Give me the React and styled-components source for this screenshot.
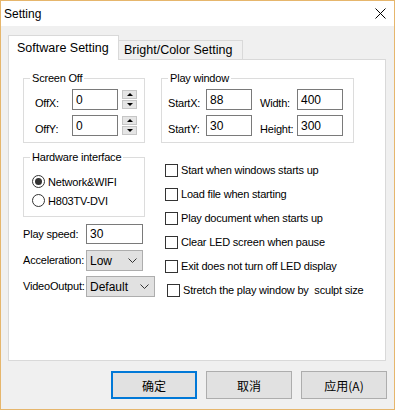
import React from 'react';
import styled, { createGlobalStyle } from 'styled-components';

const GlobalStyle = createGlobalStyle`
  body {
    margin: 0;
    background: #ffffff;
    font-family: "Liberation Sans", Arial, sans-serif;
  }
  * {
    box-sizing: border-box;
  }
`;

const Window = styled.div`
  width: 395px;
  height: 410px;
  border: 1px solid #e6b66c;
  background: #f0f0f0;
  display: flex;
  flex-direction: column;
`;

const TitleBar = styled.div`
  height: 25px;
  background: #ffffff;
  display: flex;
  align-items: center;
  justify-content: space-between;
  padding: 0 8px 0 3px;
  font-size: 12px;
  color: #000;
`;

const Body = styled.div`
  padding: 9px 8px 0 7px;
  display: flex;
  flex-direction: column;
`;

const TabStrip = styled.div`
  display: flex;
  align-items: flex-end;
  height: 24px;
  position: relative;
  z-index: 1;
`;

const Tab = styled.div`
  width: ${(p) => (p.active ? '111px' : '125px')};
  height: ${(p) => (p.active ? '25px' : '19px')};
  margin-left: ${(p) => (p.active ? '0' : '-1px')};
  margin-bottom: ${(p) => (p.active ? '-1px' : '0')};
  padding-left: ${(p) => (p.active ? '8px' : '5px')};
  background: ${(p) => (p.active ? '#ffffff' : '#f0f0f0')};
  border: 1px solid #d9d9d9;
  border-bottom: none;
  display: flex;
  align-items: center;
  font-size: 12.5px;
  color: #000;
  white-space: nowrap;
`;

const Panel = styled.div`
  height: 302px;
  background: #ffffff;
  border: 1px solid #d9d9d9;
  padding: 11px 0 0 14px;
  display: grid;
  grid-template-columns: 131px 1fr;
  grid-auto-rows: min-content;
  column-gap: 7px;
  row-gap: 7px;
  font-size: 11px;
  letter-spacing: -0.2px;
  color: #000;
`;

const Group = styled.fieldset`
  margin: 0;
  padding: 0;
  min-width: 0;
  width: ${(p) => p.width}px;
  border: 1px solid #dcdcdc;
`;

const Legend = styled.legend`
  margin-left: 6px;
  padding: 0 2px;
  font-size: 11px;
  line-height: 14px;
`;

const GroupBody = styled.div`
  padding: ${(p) => p.pad};
  display: flex;
  flex-direction: column;
  gap: ${(p) => p.gap}px;
`;

const FieldRow = styled.div`
  display: flex;
  align-items: ${(p) => (p.center ? 'center' : 'flex-start')};
  height: ${(p) => p.h || 21}px;
`;

const Label = styled.span`
  width: ${(p) => p.width}px;
  flex: none;
  padding-top: ${(p) => (p.low ? 8 : 0)}px;
  line-height: 13px;
  white-space: nowrap;
`;

const TextBox = styled.div`
  width: ${(p) => p.width}px;
  height: ${(p) => p.h || 21}px;
  flex: none;
  border: 1px solid #7a7a7a;
  background: #fff;
  padding: 0 3px;
  display: flex;
  align-items: center;
  font-size: 12px;
  letter-spacing: 0;
`;

const Spin = styled.div`
  display: flex;
  flex-direction: column;
  gap: 1px;
  margin: 1px 0 0 4px;
  width: 15px;
  height: 19px;
`;

const SpinButton = styled.div`
  flex: 1;
  background: #e5e5e5;
  border: 1px solid #c6c6c6;
  display: flex;
  align-items: center;
  justify-content: center;
`;

const Arrow = styled.span`
  width: 0;
  height: 0;
  border-left: 3px solid transparent;
  border-right: 3px solid transparent;
  ${(p) => (p.up ? 'border-bottom: 3px solid #000;' : 'border-top: 3px solid #000;')}
`;

const Gap = styled.span`
  width: ${(p) => p.w}px;
  flex: none;
`;

const Stack = styled.div`
  display: flex;
  flex-direction: column;
`;

const Radio = styled.div`
  height: 19px;
  display: flex;
  align-items: center;
  gap: 3px;
`;

const RadioDot = styled.span`
  width: 13px;
  height: 13px;
  border-radius: 50%;
  border: 1px solid #333;
  display: flex;
  align-items: center;
  justify-content: center;
  &::after {
    content: '';
    width: 7px;
    height: 7px;
    border-radius: 50%;
    background: ${(p) => (p.checked ? '#333' : 'transparent')};
  }
`;

const Select = styled.div`
  width: ${(p) => p.width}px;
  height: 21px;
  flex: none;
  background: #e1e1e1;
  border: 1px solid #adadad;
  display: flex;
  align-items: center;
  justify-content: space-between;
  padding: 0 5px 0 3px;
  font-size: 12px;
  letter-spacing: 0;
`;

const CheckList = styled.div`
  margin-top: 8px;
  display: flex;
  flex-direction: column;
`;

const CheckRow = styled.div`
  height: 24px;
  display: flex;
  align-items: center;
  gap: 3px;
  padding-left: ${(p) => 4 + (p.indent || 0)}px;
  white-space: pre;
`;

const CheckBox = styled.span`
  width: 13px;
  height: 13px;
  flex: none;
  border: 1px solid #333;
  background: #fff;
`;

const ButtonRow = styled.div`
  display: flex;
  justify-content: flex-end;
  gap: 9px;
  margin: 10px -1px 0 0;
`;

const Button = styled.div`
  width: 86px;
  height: 28px;
  background: #e1e1e1;
  border: ${(p) => (p.primary ? '2px solid #0078d7' : '1px solid #adadad')};
  display: flex;
  align-items: center;
  justify-content: center;
  font-family: "Noto Sans CJK SC", "Liberation Sans", sans-serif;
  font-size: 12px;
  color: #000;
`;

function SpinBox() {
  return (
    <Spin>
      <SpinButton>
        <Arrow up />
      </SpinButton>
      <SpinButton>
        <Arrow />
      </SpinButton>
    </Spin>
  );
}

function Chevron() {
  return (
    <svg width="9" height="5" viewBox="0 0 9 5">
      <path d="M0.5 0.5 L4.5 4.5 L8.5 0.5" fill="none" stroke="#333" strokeWidth="1" />
    </svg>
  );
}

const checks = [
  'Start when windows starts up',
  'Load file when starting',
  'Play document when starts up',
  'Clear LED screen when pause',
  'Exit does not turn off LED display',
];

export default function App() {
  return (
    <>
      <GlobalStyle />
      <Window>
        <TitleBar>
          <span>Setting</span>
          <svg width="11" height="11" viewBox="0 0 11 11">
            <path d="M0.5 0.5 L10.5 10.5 M10.5 0.5 L0.5 10.5" stroke="#000" strokeWidth="1" />
          </svg>
        </TitleBar>
        <Body>
          <TabStrip>
            <Tab active>Software Setting</Tab>
            <Tab>Bright/Color Setting</Tab>
          </TabStrip>
          <Panel>
            <Group width={122}>
              <Legend>Screen Off</Legend>
              <GroupBody pad="4px 0 6px 11px" gap={5}>
                <FieldRow>
                  <Label width={37} low>OffX:</Label>
                  <TextBox width={46}>0</TextBox>
                  <SpinBox />
                </FieldRow>
                <FieldRow>
                  <Label width={37} low>OffY:</Label>
                  <TextBox width={46}>0</TextBox>
                  <SpinBox />
                </FieldRow>
              </GroupBody>
            </Group>
            <Group width={193}>
              <Legend>Play window</Legend>
              <GroupBody pad="4px 0 6px 6px" gap={5}>
                <FieldRow>
                  <Label width={38} low>StartX:</Label>
                  <TextBox width={46}>88</TextBox>
                  <Gap w={8} />
                  <Label width={37} low>Width:</Label>
                  <TextBox width={46}>400</TextBox>
                </FieldRow>
                <FieldRow>
                  <Label width={38} low>StartY:</Label>
                  <TextBox width={46}>30</TextBox>
                  <Gap w={8} />
                  <Label width={37} low>Height:</Label>
                  <TextBox width={46}>300</TextBox>
                </FieldRow>
              </GroupBody>
            </Group>

            <Stack>
              <Group width={122}>
                <Legend>Hardware interface</Legend>
                <GroupBody pad="8px 0 6px 8px" gap={0}>
                  <Radio>
                    <RadioDot checked />
                    Network&amp;WIFI
                  </Radio>
                  <Radio>
                    <RadioDot />
                    H803TV-DVI
                  </Radio>
                </GroupBody>
              </Group>
              <FieldRow center h={20} style={{ marginTop: 7 }}>
                <Label width={63}>Play speed:</Label>
                <TextBox width={57} h={20}>30</TextBox>
              </FieldRow>
              <FieldRow center style={{ marginTop: 6 }}>
                <Label width={63}>Acceleration:</Label>
                <Select width={57}>
                  Low
                  <Chevron />
                </Select>
              </FieldRow>
              <FieldRow center style={{ marginTop: 5 }}>
                <Label width={63}>VideoOutput:</Label>
                <Select width={69}>
                  Default
                  <Chevron />
                </Select>
              </FieldRow>
            </Stack>

            <CheckList>
              {checks.map((c) => (
                <CheckRow key={c}>
                  <CheckBox />
                  {c}
                </CheckRow>
              ))}
              <CheckRow indent={2}>
                <CheckBox />
                {'Stretch the play window by  sculpt size'}
              </CheckRow>
            </CheckList>
          </Panel>
          <ButtonRow>
            <Button primary>确定</Button>
            <Button>取消</Button>
            <Button>应用(A)</Button>
          </ButtonRow>
        </Body>
      </Window>
    </>
  );
}
